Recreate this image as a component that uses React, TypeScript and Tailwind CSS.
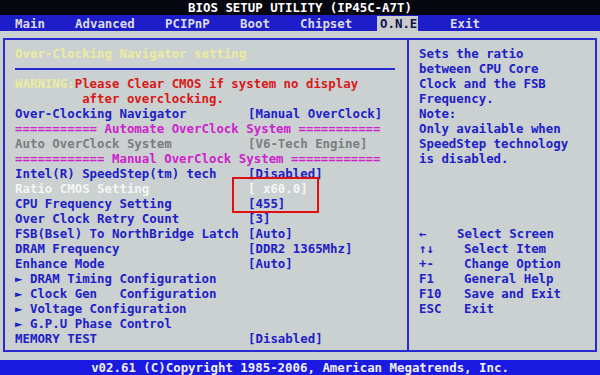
const menu = [
  { label: 'Main', w: 'w-[60px]' },
  { label: 'Advanced', w: 'w-[90px]' },
  { label: 'PCIPnP', w: 'w-[75px]' },
  { label: 'Boot', w: 'w-[60px]' },
  { label: 'Chipset', w: 'w-[80px]' },
]

const settings = [
  { label: 'Intel(R) SpeedStep(tm) tech', value: '[Disabled]', color: 'text-[#2020c8]' },
  { label: 'Ratio CMOS Setting', value: '[ x60.0]', color: 'text-[#f6f6f6]' },
  { label: 'CPU Frequency Setting', value: '[455]', color: 'text-[#2020c8]' },
  { label: 'Over Clock Retry Count', value: '[3]', color: 'text-[#2020c8]' },
  { label: 'FSB(Bsel) To NorthBridge Latch', value: '[Auto]', color: 'text-[#2020c8]' },
  { label: 'DRAM Frequency', value: '[DDR2 1365Mhz]', color: 'text-[#2020c8]' },
  { label: 'Enhance Mode', value: '[Auto]', color: 'text-[#2020c8]' },
]

const submenus = ['DRAM Timing Configuration', 'Clock Gen   Configuration', 'Voltage Configuration', 'G.P.U Phase Control']

const help = [
  'Sets the ratio',
  'between CPU Core',
  'Clock and the FSB',
  'Frequency.',
  'Note:',
  'Only available when',
  'SpeedStep technology',
  'is disabled.',
]

const keys = [
  { key: '←', text: 'Select Screen', w: 'w-[38px]' },
  { key: '↑↓', text: 'Select Item', w: 'w-[45px]' },
  { key: '+-', text: 'Change Option', w: 'w-[45px]' },
  { key: 'F1', text: 'General Help', w: 'w-[45px]' },
  { key: 'F10', text: 'Save and Exit', w: 'w-[45px]' },
  { key: 'ESC', text: 'Exit', w: 'w-[45px]' },
]

function Row({ label, value, color }: { label: string; value: string; color: string }) {
  return (
    <div className={`flex whitespace-pre ${color}`}>
      <span className="w-[233px] shrink-0">{label}</span>
      <span>{value}</span>
    </div>
  )
}

export default function App() {
  return (
    <div className="w-[600px] h-[375px] overflow-hidden flex flex-col bg-[#cbd0d1] font-['DejaVu_Sans_Mono',monospace] font-bold text-[12.4px] leading-[15px]">
      {/* Title */}
      <div className="h-[15px] shrink-0 bg-[#07070f] text-white text-center">BIOS SETUP UTILITY (IP45C-A7T)</div>

      {/* Menu bar */}
      <div className="h-[16px] shrink-0 bg-[#1d1dc9] flex items-center pl-[15px] text-[#dcdce4]">
        {menu.map((m) => (
          <span key={m.label} className={m.w}>
            {m.label}
          </span>
        ))}
        <span className="w-[41px] shrink-0 ml-[-3px] pl-[3px] bg-[#c8cccd] text-[#12124a]">O.N.E</span>
        <span className="ml-[32px]">Exit</span>
      </div>

      {/* Panels */}
      <div className="mt-[7px] ml-[3px] w-[594px] h-[314px] shrink-0 border-2 border-[#2a2ad2] flex">
        <div className="relative w-[402px] shrink-0 pl-[10px] pt-[6px]">
          <div className="text-[#ecec9e]">Over-Clocking Navigator setting</div>
          <div className="h-[15px] flex items-center">
            <div className="w-[380px] h-[2px] bg-[#2a2ad2]" />
          </div>
          <div className="whitespace-pre">
            <span className="text-[#ecec9e]">WARNING:</span>
            <span className="text-[#d81818]">Please Clear CMOS if system no display</span>
          </div>
          <div className="whitespace-pre text-[#d81818]">{'         after overclocking.'}</div>
          <Row label="Over-Clocking Navigator" value="[Manual OverClock]" color="text-[#2020c8]" />
          <div className="whitespace-pre text-[#cc22cc]">=========== Automate OverClock System ===========</div>
          <Row label="Auto OverClock System" value="[V6-Tech Engine]" color="text-[#7c7c80]" />
          <div className="whitespace-pre text-[#cc22cc]">============ Manual OverClock System ============</div>
          {settings.map((s) => (
            <Row key={s.label} {...s} />
          ))}
          {submenus.map((s) => (
            <div key={s} className="whitespace-pre text-[#2020c8]">
              {'► ' + s}
            </div>
          ))}
          <Row label="MEMORY TEST" value="[Disabled]" color="text-[#2020c8]" />

          {/* red annotation box */}
          <div className="absolute left-[227px] top-[137px] w-[87px] h-[36px] border-2 border-[#e01010]" />
        </div>

        <div className="flex-1 border-l-2 border-[#2a2ad2] pl-[10px] pt-[6px] text-[#2020c8]">
          {help.map((h) => (
            <div key={h} className="whitespace-pre">
              {h}
            </div>
          ))}
          <div className="mt-[60px]">
            {keys.map((k) => (
              <div key={k.key} className="flex whitespace-pre">
                <span className={`${k.w} shrink-0`}>{k.key}</span>
                <span>{k.text}</span>
              </div>
            ))}
          </div>
        </div>
      </div>

      {/* Footer */}
      <div className="mt-[8px] h-[15px] shrink-0 bg-[#1a1ae2] text-[#f0f0f0] text-center">
        v02.61 (C)Copyright 1985-2006, American Megatrends, Inc.
      </div>
    </div>
  )
}
